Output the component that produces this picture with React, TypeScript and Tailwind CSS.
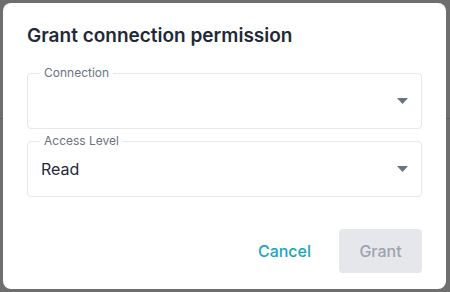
export default function App() {
  return (
    <div className="relative h-[292px] w-[450px] overflow-hidden bg-[#6e6e6e] p-[3px] font-['Inter',sans-serif]">
      <div className="absolute left-0 right-0 top-[118px] h-px bg-[#5f5f5f]" />
      <div className="relative flex h-[286px] w-[443px] flex-col rounded-lg bg-white px-6 pt-[19px]">
        <h2 className="text-[19px] font-semibold leading-7 text-[#1f2937]">Grant connection permission</h2>

        <SelectField label="Connection" value="" className="mt-[23px]" />
        <SelectField label="Access Level" value="Read" className="mt-3" />

        <div className="mt-8 flex items-center justify-end gap-7">
          <button className="text-base font-medium text-[#17a6c0]">Cancel</button>
          <button className="h-11 w-[83px] rounded bg-[#e5e7eb] text-base font-medium text-[#9ca3af]">Grant</button>
        </div>
      </div>
    </div>
  );
}

function SelectField({ label, value, className }: { label: string; value: string; className?: string }) {
  return (
    <div className={`relative flex h-14 items-center justify-between rounded border border-[#e5e7eb] pl-[13px] pr-3 ${className ?? ''}`}>
      <span className="absolute -top-[9px] left-3 bg-white px-1 text-xs leading-4 text-[#6b7280]">{label}</span>
      <span className="text-base text-[#1f2937]">{value}</span>
      <svg width="11" height="6" viewBox="0 0 11 6" className="mr-px">
        <path d="M0 0h11L5.5 6z" fill="#6b7280" />
      </svg>
    </div>
  );
}
